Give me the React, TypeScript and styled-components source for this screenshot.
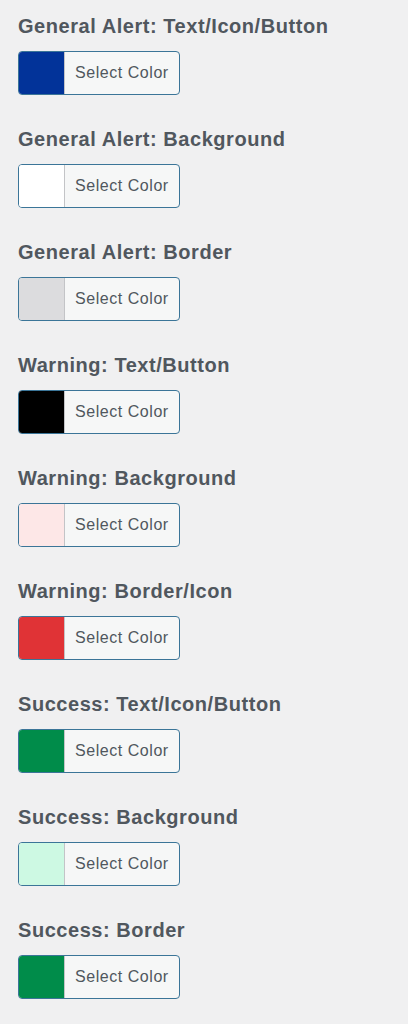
import React from "react";
import styled, { createGlobalStyle } from "styled-components";

const Global = createGlobalStyle`
  html, body { margin: 0; padding: 0; background: #f0f0f1; }
  body { font-family: "Liberation Sans", Arial, sans-serif; }
`;

const Page = styled.div`
  padding: 14px 0 0 18px;
  display: flex;
  flex-direction: column;
`;

const Field = styled.div`
  display: flex;
  flex-direction: column;
  align-items: flex-start;
  margin-bottom: 32px;
`;

const Heading = styled.h3`
  margin: 0 0 13px 0;
  font-size: 20px;
  line-height: 24px;
  font-weight: 700;
  color: #50575e;
  letter-spacing: 0.55px;
  white-space: nowrap;
`;

const ColorButton = styled.button`
  display: flex;
  align-items: stretch;
  height: 44px;
  width: 162px;
  padding: 0;
  border: 1px solid #3b7598;
  border-radius: 4px;
  background: #f6f7f7;
  overflow: hidden;
  cursor: pointer;
  box-sizing: border-box;
`;

const Swatch = styled.span<{ $color: string }>`
  width: 45px;
  flex: none;
  background: ${(p) => p.$color};
  border-right: 1px solid #c3c4c7;
`;

const Label = styled.span`
  display: flex;
  align-items: center;
  padding-left: 10px;
  font-family: "Liberation Sans", Arial, sans-serif;
  font-size: 16px;
  letter-spacing: 0.55px;
  color: #50575e;
  white-space: nowrap;
`;

const fields: { label: string; color: string }[] = [
  { label: "General Alert: Text/Icon/Button", color: "#023399" },
  { label: "General Alert: Background", color: "#ffffff" },
  { label: "General Alert: Border", color: "#dcdcde" },
  { label: "Warning: Text/Button", color: "#000000" },
  { label: "Warning: Background", color: "#fde7e7" },
  { label: "Warning: Border/Icon", color: "#e03336" },
  { label: "Success: Text/Icon/Button", color: "#008c4a" },
  { label: "Success: Background", color: "#cdf9e3" },
  { label: "Success: Border", color: "#008c4a" },
];

export default function App() {
  return (
    <>
      <Global />
      <Page>
        {fields.map((f) => (
          <Field key={f.label}>
            <Heading>{f.label}</Heading>
            <ColorButton type="button">
              <Swatch $color={f.color} />
              <Label>Select Color</Label>
            </ColorButton>
          </Field>
        ))}
      </Page>
    </>
  );
}
